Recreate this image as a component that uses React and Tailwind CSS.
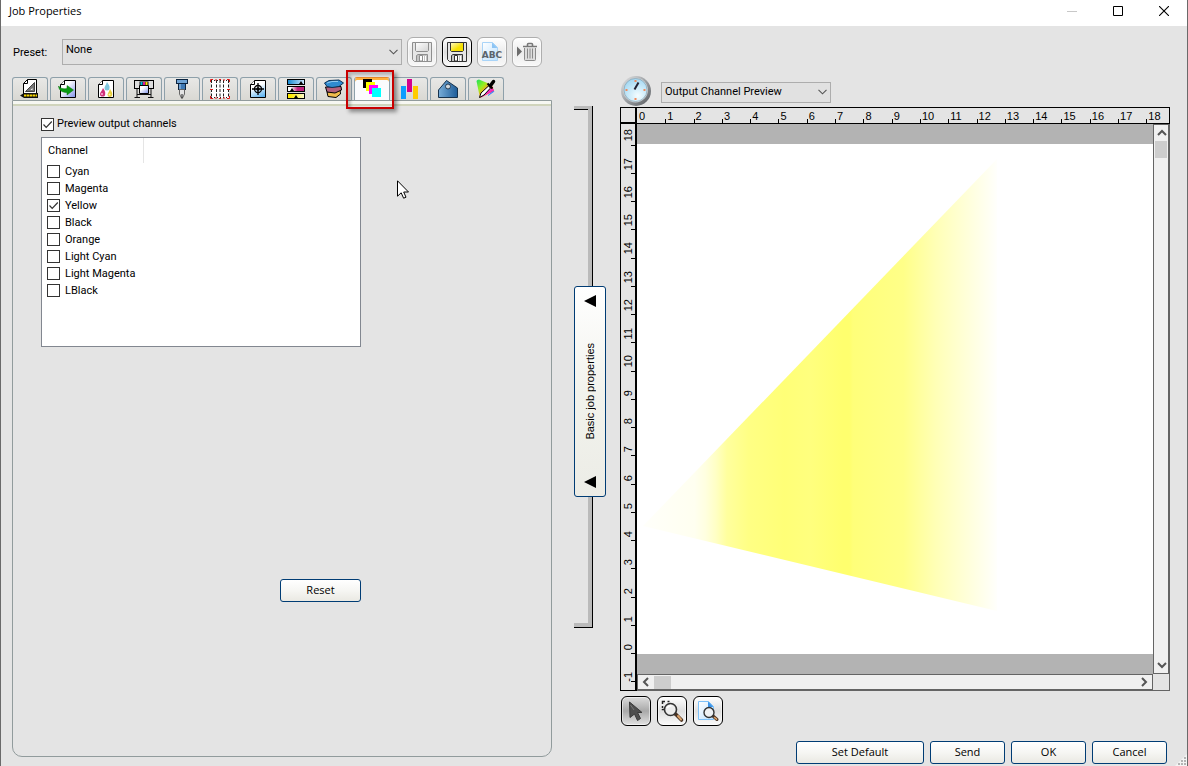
import React, { useState } from 'react';
import clsx from 'clsx';

const CHANNELS = ['Cyan', 'Magenta', 'Yellow', 'Black', 'Orange', 'Light Cyan', 'Light Magenta', 'LBlack'];

const H_TICKS = Array.from({ length: 19 }, (_, i) => i);
const V_TICKS = Array.from({ length: 20 }, (_, i) => 18 - i);

// Small sheet of paper with a folded corner, shared by several icons
const Sheet = ({ fill = '#fff' }) => (
    <>
        <path d="M6.5 1.5H17.5V18.5H2.5V5.5Z" fill={fill} stroke="#000" />
        <path d="M6.5 1.5V5.5H2.5" fill="#fff" stroke="#000" />
    </>
);

const TABS = [
    {
        name: 'Layout',
        icon: (
            <>
                <path d="M7.5 .5H16.5V15H3.5V4.5Z" fill="#fff" stroke="#000" />
                <path d="M7.5 .5V4.5H3.5" fill="none" stroke="#000" />
                <path d="M14.500 3.500V12.500H5.500Z" fill="#777" stroke="#444" />
                <path d="M12.500 9V11H10.500Z" fill="#fff" />
                <path d="M4 14H18V19H4L0 16.500Z" fill="#111" />
                <path d="M4 16.500H17" stroke="#f5d400" strokeWidth="2" strokeDasharray="2.500 .5" />
            </>
        ),
    },
    {
        name: 'Workflow',
        icon: (
            <>
                <Sheet fill="url(#sheetBlue)" />
                <path d="M.5 7C3 10 6 10 9 9.500V6.500L15.500 11L9 16V13.500C4 13.500 1 11.500 .5 7Z" fill="#0a9a12" stroke="#067008" strokeWidth=".5" />
            </>
        ),
    },
    {
        name: 'Color management',
        icon: (
            <>
                <Sheet />
                <path d="M11 3C13 6 14 7 13.500 9A2.500 2.500 0 0 1 8.500 9C8.500 7 10 6 11 3Z" fill="#7fc6dd" />
                <path d="M7 9C9 12 9.500 13 9.200 15A2.600 2.600 0 0 1 4 15C4 13 6 12 7 9Z" fill="#d0307a" />
                <path d="M14 10C16 13 16.500 14 16.200 16A2.400 2.400 0 0 1 11.500 16C11.500 14 13 13 14 10Z" fill="#e8cf3c" />
                <circle cx="6" cy="15" r="1" fill="#f6b7d4" />
                <circle cx="13.500" cy="15.500" r="1" fill="#fff6ba" />
            </>
        ),
    },
    {
        name: 'Printer',
        icon: (
            <>
                <path d="M3 9V18.500M17 18.500V9M.5 18.500H6M14 18.500H19.500M3 15.500H17" fill="none" stroke="#111" />
                <rect x=".5" y="1.500" width="19" height="8" fill="#ddd" stroke="#000" />
                <rect x="5.500" y="2.500" width="9" height="4" fill="#111" />
                <path d="M7.500 3V6" stroke="#0bd" strokeWidth="2" />
                <path d="M10 3V6" stroke="#e0189a" strokeWidth="2" />
                <path d="M12.500 3V6" stroke="#fd0" strokeWidth="2" />
                <path d="M5.500 6.500H14.500V14.500H5.500Z" fill="url(#sheetBlue)" stroke="#000" />
            </>
        ),
    },
    {
        name: 'Cutting',
        icon: (
            <>
                <rect x="4.500" y=".5" width="11" height="4" fill="#6fa3d4" stroke="#0b2440" />
                <rect x="6.500" y="4.500" width="7" height="6" fill="#3d78b4" stroke="#0b2440" />
                <path d="M8 5V10" stroke="#a9cdf0" />
                <path d="M7.500 10.500H12.500V15L10.500 19H9.500L7.500 15Z" fill="#e4e4e4" stroke="#666" />
                <path d="M10 15V19.500" stroke="#222" />
            </>
        ),
    },
    {
        name: 'Tiling',
        icon: (
            <>
                <rect x="1" y="1" width="18" height="18" fill="#fff" />
                <path d="M1.500 1V19M6.500 1V19M13.500 1V19M18.500 1V19M10 1V19" stroke="#222" strokeDasharray="3 1.500" />
                <path d="M1 1.500H19M1 18.500H19" stroke="#222" strokeDasharray="1 2" />
                <path d="M.5 3V.5H3M17 .5H19.500V3M19.500 17V19.500H17M3 19.500H.5V17M0 10.500H3M17 10.500H20M9 .5H11M9 19.500H11M6 0V2M14 0V2M6 18V20M14 18V20" fill="none" stroke="#e01818" />
            </>
        ),
    },
    {
        name: 'Marks',
        icon: (
            <>
                <Sheet fill="url(#sheetCyan)" />
                <circle cx="10" cy="10" r="3.500" fill="none" stroke="#000" strokeWidth="1.300" />
                <path d="M10 4V16M4 10H16" stroke="#000" strokeWidth="1.300" />
                <circle cx="10" cy="10" r="1.700" fill="#000" />
            </>
        ),
    },
    {
        name: 'Color correction',
        icon: (
            <>
                <rect x="1.500" y=".5" width="17" height="5" fill="url(#barCyan)" stroke="#000" />
                <rect x="1.500" y="7.500" width="17" height="5" fill="url(#barMagenta)" stroke="#000" />
                <rect x="1.500" y="14.500" width="17" height="5" fill="url(#barYellow)" stroke="#000" />
                <path d="M13 5L15 2L17 5ZM4 12L6 9L8 12ZM8 19L10 16L12 19Z" fill="#000" />
            </>
        ),
    },
    {
        name: 'Layers',
        icon: (
            <>
                <path d="M3 13L16 10L16.500 15L12 18.500L4 17.500Z" fill="#f0bd4c" stroke="#000" />
                <path d="M1.500 8L17 7.500L17.500 11L11 14L3 13Z" fill="#b3607c" stroke="#000" />
                <path d="M.5 4L5 1.500L15 1L19.500 4L15 7.500L8 8.500L3 7.500Z" fill="#2f8bd0" stroke="#0d3154" />
                <path d="M3 4L8 2.500H14" stroke="#8cc8ef" fill="none" />
            </>
        ),
    },
    {
        name: 'Output channels',
        icon: (
            <>
                <rect x="1" y="0" width="9" height="9" fill="#000" />
                <rect x="4" y="3" width="9" height="9" fill="#ff0" />
                <rect x="7" y="6" width="9" height="9" fill="#f0f" />
                <rect x="10" y="9" width="9" height="9" fill="#0ff" />
            </>
        ),
    },
    {
        name: 'Ink levels',
        icon: (
            <>
                <rect x="1" y="7" width="5" height="13" fill="#0d9dff" />
                <rect x="7" y="0" width="5" height="13" fill="#d4008c" />
                <rect x="13" y="7" width="5" height="13" fill="#ffcb00" />
            </>
        ),
    },
    {
        name: 'Cost',
        icon: (
            <>
                <path d="M.5 11L8.500 1.500L19.500 9V18.500H.5Z" fill="url(#tagBlue)" stroke="#16324c" />
                <circle cx="10" cy="7.500" r="2.500" fill="#cfd6dc" stroke="#243c52" />
            </>
        ),
    },
    {
        name: 'Color replacement',
        icon: (
            <>
                <path d="M.5 2Q1 .5 3 .5L16 6L18 12L4 19Z" fill="url(#gamut)" />
                <path d="M12 8L18 11L5 18.500L4 16Z" fill="#f22fc0" />
                <path d="M12 16L17 12L18.500 12.500L12 17Z" fill="#3a7bff" />
                <path d="M3.500 18.500L5 14L12.500 7L14.500 9L8 16Z" fill="#fff" stroke="#000" />
                <path d="M11.500 4.500L16.500 9.500" stroke="#000" strokeWidth="2" />
                <path d="M14.500 6.500L17.500 2.500" stroke="#000" strokeWidth="3.500" strokeLinecap="round" />
            </>
        ),
    },
];

function IconGradients() {
    return (
        <svg aria-hidden="true" className="absolute h-0 w-0">
            <defs>
                <linearGradient id="sheetBlue" x1="0" y1="0" x2="1" y2="1">
                    <stop offset="35%" stopColor="#fff" />
                    <stop offset="100%" stopColor="#7d8fe8" />
                </linearGradient>
                <linearGradient id="sheetCyan" x1="0.3" y1="0" x2="0.7" y2="1">
                    <stop offset="35%" stopColor="#fff" />
                    <stop offset="100%" stopColor="#5fb4f0" />
                </linearGradient>
                <linearGradient id="barCyan">
                    <stop offset="0%" stopColor="#1488d0" />
                    <stop offset="100%" stopColor="#cfeaff" />
                </linearGradient>
                <linearGradient id="barMagenta">
                    <stop offset="20%" stopColor="#fff" />
                    <stop offset="60%" stopColor="#c0207c" />
                </linearGradient>
                <linearGradient id="barYellow">
                    <stop offset="20%" stopColor="#ffe800" />
                    <stop offset="100%" stopColor="#fffbd0" />
                </linearGradient>
                <linearGradient id="tagBlue">
                    <stop offset="0%" stopColor="#79add8" />
                    <stop offset="100%" stopColor="#1d5c98" />
                </linearGradient>
                <linearGradient id="gamut" x1="0" y1="0" x2="1" y2="1">
                    <stop offset="0%" stopColor="#18e060" />
                    <stop offset="35%" stopColor="#9af01c" />
                    <stop offset="55%" stopColor="#ff9c20" />
                    <stop offset="75%" stopColor="#ff2060" />
                    <stop offset="100%" stopColor="#4a60ff" />
                </linearGradient>
                <linearGradient id="diskYellow" x1="0" y1="0" x2="1" y2="1">
                    <stop offset="0%" stopColor="#fffbd0" />
                    <stop offset="60%" stopColor="#f5e000" />
                </linearGradient>
                <linearGradient id="diskGray" x1="0" y1="0" x2="1" y2="1">
                    <stop offset="0%" stopColor="#fff" />
                    <stop offset="100%" stopColor="#d4d4d4" />
                </linearGradient>
                <linearGradient id="paperBlue" x1="0" y1="0" x2="1" y2="1">
                    <stop offset="0%" stopColor="#fff" />
                    <stop offset="100%" stopColor="#bfe2ff" />
                </linearGradient>
                <radialGradient id="dial" cx="0.6" cy="0.75" r="0.8">
                    <stop offset="0%" stopColor="#f4fdff" />
                    <stop offset="100%" stopColor="#9fd6f2" />
                </radialGradient>
                <linearGradient id="dialRim" x1="0" y1="0" x2="1" y2="1">
                    <stop offset="0%" stopColor="#e8e8e8" />
                    <stop offset="45%" stopColor="#a2a6aa" />
                    <stop offset="100%" stopColor="#55585c" />
                </linearGradient>
            </defs>
        </svg>
    );
}

const DiskIcon = ({ stroke, fill }) => (
    <svg viewBox="0 0 20 20" className="h-5 w-5" aria-hidden="true">
        <path d="M.5 .5H19.500V19.500H2.500L.5 17.500Z" fill="#e6e6e6" stroke={stroke} />
        <path d="M3.500 .5H16.500V8.500L15.500 9.500H4.500L3.500 8.500Z" fill={fill} stroke={stroke} />
        <path d="M4.500 19V13.500L6 12.500H15.500V19" fill="#c4c4c4" stroke={stroke} />
        <path d="M7.500 13.500H10.500V19H7.500Z" fill="#fff" stroke={stroke} />
        <path d="M11.500 14V19M13.500 14V19" stroke="#fff" />
    </svg>
);

const RenameIcon = () => (
    <svg viewBox="0 0 20 20" className="h-5 w-5 overflow-visible" aria-hidden="true">
        <path d="M.5 .5H10.500L15.500 5.500V18.500H.5Z" fill="url(#paperBlue)" stroke="#a9d4f8" />
        <path d="M10 .5V6H15.500Z" fill="#8cc4f4" />
        <text x="10" y="16" textAnchor="middle" fontFamily="DejaVu Sans" fontWeight="bold" fontSize="9" fill="#5c646c">ABC</text>
    </svg>
);

const TrashIcon = () => (
    <svg viewBox="0 0 20 20" className="h-5 w-5" aria-hidden="true">
        <path d="M0 4.500L5 9.500L0 14.500Z" fill="#6c6c6c" />
        <path d="M6 4.500H20M10.500 4V2.500Q10.500 1.500 11.500 1.500H14.500Q15.500 1.500 15.500 2.500V4" fill="none" stroke="#777" strokeWidth="1.600" />
        <path d="M7.500 6V17.500Q7.500 18.500 8.500 18.500H17.500Q18.500 18.500 18.500 17.500V6" fill="#ddd" stroke="#8a8a8a" />
        <path d="M10.500 6.500V16.500M13 6.500V16.500M15.500 6.500V16.500" stroke="#888" />
    </svg>
);

const ArrowIcon = () => (
    <svg viewBox="0 0 20 20" className="h-5 w-5" aria-hidden="true">
        <path d="M3.500 1L16 11.500H11.500L14.500 17.500L11.500 19.500L8.500 13L4 16.500Z" fill="#4e4e4e" stroke="#3a3a3a" />
        <path d="M4.500 4L8 9" stroke="#777" />
    </svg>
);

const ZoomAreaIcon = () => (
    <svg viewBox="0 0 20 20" className="h-5 w-5 overflow-visible" aria-hidden="true">
        <path d="M.5 3V.5H3M5.500 .5H7.500M.5 5V7M.5 8V8.500H3" fill="none" stroke="#222" strokeWidth="1.500" />
        <path d="M13.500 13L19.500 19" stroke="#4a3323" strokeWidth="3.600" strokeLinecap="round" />
        <path d="M16 15L19 18.500" stroke="#dba168" strokeWidth="2" strokeLinecap="round" />
        <circle cx="8.500" cy="8.500" r="6" fill="#eee" fillOpacity=".85" stroke="#333" strokeWidth="1.600" />
        <path d="M5 7Q6.500 4.500 9.500 5" fill="none" stroke="#fff" strokeWidth="1.500" />
    </svg>
);

const ZoomPageIcon = () => (
    <svg viewBox="0 0 20 20" className="h-5 w-5 overflow-visible" aria-hidden="true">
        <path d="M.5 .5H10.500L15.500 5.500V18.500H.5Z" fill="url(#paperBlue)" stroke="#7cc0f8" />
        <path d="M10 .5V6H15.500Z" fill="#3c94e8" />
        <path d="M15 15L19 18.500" stroke="#4a3323" strokeWidth="3" strokeLinecap="round" />
        <path d="M16.500 16.500L18.500 18.200" stroke="#dba168" strokeWidth="1.600" strokeLinecap="round" />
        <circle cx="11" cy="11.500" r="5" fill="#f2f2f2" fillOpacity=".9" stroke="#333" strokeWidth="1.400" />
    </svg>
);

function ToolButton({ label, active, disabled, children }) {
    return (
        <button
            type="button"
            aria-label={label}
            disabled={disabled}
            className={clsx(
                'flex h-[30px] w-[30px] items-center justify-center rounded-[6px] border bg-linear-to-b shadow-[inset_0_0_0_1px_#fff8]',
                disabled ? 'border-[#aeaeae] from-white via-[#ececec] to-[#f8f8f8]' : 'border-black',
                !disabled && (active ? 'from-[#dcdcdc] via-[#a9a9a9] to-[#e2e2e2]' : 'from-white via-[#dedede] to-[#fafafa]')
            )}
        >
            {children}
        </button>
    );
}

function DialogButton({ className, children }) {
    return (
        <button
            type="button"
            className={clsx(
                'h-[23px] rounded-[3px] border border-[#003c74] bg-linear-to-b from-white via-[#f6f6f3] to-[#eae9e3] pb-px font-["Open_Sans",sans-serif] text-[11px] leading-4',
                className
            )}
        >
            {children}
        </button>
    );
}

function DropDown({ id, options, className }) {
    return (
        <div className={clsx('relative', className)}>
            <select
                id={id}
                aria-label={id}
                className="block h-full w-full appearance-none border border-[#adadad] bg-[#e1e1e1] px-[3px] text-[11px] leading-4"
            >
                {options.map((option) => (
                    <option key={option}>{option}</option>
                ))}
            </select>
            <svg viewBox="0 0 9 6" className="pointer-events-none absolute top-1/2 right-1 h-[6px] w-[9px] -translate-y-1/2" aria-hidden="true">
                <path d="M.5 .8L4.500 4.800L8.500 .8" fill="none" stroke="#555" strokeWidth="1.100" />
            </svg>
        </div>
    );
}

function CheckBox({ label, checked, onChange, gap }) {
    return (
        <label className={clsx('flex items-center', gap)}>
            <span className="relative flex h-[13px] w-[13px] shrink-0">
                <input
                    type="checkbox"
                    checked={checked}
                    onChange={onChange}
                    className="h-full w-full appearance-none border border-[#333] bg-white"
                />
                {checked && (
                    <svg viewBox="0 0 13 13" className="pointer-events-none absolute inset-0" aria-hidden="true">
                        <path d="M2.500 6.500L5.200 9.300L10.800 3.500" fill="none" stroke="#333" strokeWidth="1.200" />
                    </svg>
                )}
            </span>
            <span>{label}</span>
        </label>
    );
}

function TitleBar() {
    return (
        <header className="flex h-[26px] shrink-0 items-center justify-between bg-white pr-[18px] pb-[5px] pl-2">
            <h1 className='font-["Open_Sans",sans-serif] text-[11px] leading-4'>Job Properties</h1>
            <div className="flex gap-9">
                <button type="button" aria-label="Minimize">
                    <svg viewBox="0 0 10 10" className="h-[10px] w-[10px]"><path d="M0 5.500H10" stroke="#c8c8c8" /></svg>
                </button>
                <button type="button" aria-label="Maximize">
                    <svg viewBox="0 0 10 10" className="h-[10px] w-[10px]"><path d="M.5 .5H9.500V9.500H.5Z" fill="none" stroke="#000" /></svg>
                </button>
                <button type="button" aria-label="Close">
                    <svg viewBox="0 0 10 10" className="h-[10px] w-[10px]"><path d="M0 0L10 10M10 0L0 10" stroke="#000" strokeWidth="1.100" /></svg>
                </button>
            </div>
        </header>
    );
}

function PresetRow() {
    return (
        <div className="flex h-[30px] items-center gap-[5px]">
            <label htmlFor="Preset" className="w-[45px] pt-[3px] pl-px text-[11px]">Preset:</label>
            <DropDown id="Preset" options={['None']} className="h-[26px] min-w-0 flex-1 [&>select]:pb-[4px]" />
            <ToolButton label="Save preset" disabled><DiskIcon stroke="#8f8f8f" fill="url(#diskGray)" /></ToolButton>
            <ToolButton label="Save preset as"><DiskIcon stroke="#333" fill="url(#diskYellow)" /></ToolButton>
            <ToolButton label="Rename preset" disabled><RenameIcon /></ToolButton>
            <ToolButton label="Delete preset" disabled><TrashIcon /></ToolButton>
        </div>
    );
}

function TabStrip({ current, onSelect }) {
    return (
        <div role="tablist" className="flex gap-[2px]">
            {TABS.map((tab, index) => (
                <div key={tab.name} className="relative">
                    <button
                        type="button"
                        role="tab"
                        aria-label={tab.name}
                        aria-selected={index === current}
                        onClick={() => onSelect(index)}
                        className={clsx(
                            'flex h-[23px] w-9 justify-center rounded-t-[3px] border border-b-0 border-[#8ea0aa] pt-px',
                            index === current
                                ? 'border-t-[#e68b2c] bg-[#fbfbfd] shadow-[inset_0_2px_0_#ffb13d]'
                                : 'bg-linear-to-b from-[#e8e8e6] to-[#d9d8d3]'
                        )}
                    >
                        <svg viewBox="0 0 20 20" className="relative h-5 w-5" aria-hidden="true">{tab.icon}</svg>
                    </button>
                    {index === current && (
                        <span className="pointer-events-none absolute -top-[7px] -right-1 -bottom-[9px] -left-2 z-10 border-2 border-[#c80000] shadow-[3px_3px_4px_#0006,inset_3px_3px_3px_#0003]" />
                    )}
                </div>
            ))}
        </div>
    );
}

function ChannelTable({ selected, onToggle }) {
    return (
        <div className="h-[210px] border border-[#828790] bg-white">
            <table className="w-full border-collapse text-left text-[11px] leading-[17px]">
                <thead>
                    <tr className="h-[25px]">
                        <th className="w-[101px] border-r border-[#e5e5e5] pl-[6px] font-normal">Channel</th>
                        <th aria-hidden="true" />
                    </tr>
                </thead>
                <tbody>
                    {CHANNELS.map((channel) => (
                        <tr key={channel}>
                            <td colSpan={2} className="pl-[5px]">
                                <CheckBox
                                    label={channel}
                                    gap="gap-[5px]"
                                    checked={selected.includes(channel)}
                                    onChange={() => onToggle(channel)}
                                />
                            </td>
                        </tr>
                    ))}
                </tbody>
            </table>
        </div>
    );
}

function OutputChannelsPanel() {
    const [preview, setPreview] = useState(true);
    const [selected, setSelected] = useState(['Yellow']);

    const handleToggle = (channel) => {
        setSelected((prev) => (prev.includes(channel) ? prev.filter((c) => c !== channel) : [...prev, channel]));
    };

    return (
        <section className="flex-1 overflow-hidden rounded-b-[10px] border border-[#919b9c]">
            <div className="h-[5px] border-b-2 border-[#d0d4bc] bg-[#f6f7f2]" />
            <div className="ml-7 flex max-w-[320px] flex-col pt-[10px]">
                <div className="text-[11px] leading-4">
                    <CheckBox label="Preview output channels" gap="gap-[3px]" checked={preview} onChange={() => setPreview(!preview)} />
                </div>
                <div className="mt-[5px]">
                    <ChannelTable selected={selected} onToggle={handleToggle} />
                </div>
                <DialogButton className="mt-[232px] w-[81px] self-end">Reset</DialogButton>
            </div>
        </section>
    );
}

function CollapseStrip() {
    return (
        <div className="flex flex-col pt-20 pb-[138px]">
            <div className="flex w-[19px] flex-[180] border-r border-black">
                <div className="flex w-full border-t-[3px] border-r-4 border-[#bababa]">
                    <div className="w-full border-t border-black" />
                </div>
            </div>
            <button
                type="button"
                className="flex h-[211px] w-8 flex-col items-center justify-between rounded-[3px] border border-[#003c74] bg-linear-to-b from-white via-[#f2f3ed] to-[#ecece6] py-2"
            >
                <svg viewBox="0 0 12 12" className="h-3 w-3" aria-hidden="true"><path d="M0 6L12 0V12Z" /></svg>
                <span className='rotate-180 font-["Liberation_Sans",sans-serif] text-[11px] leading-4 [writing-mode:vertical-rl]'>
                    Basic job properties
                </span>
                <svg viewBox="0 0 12 12" className="h-3 w-3" aria-hidden="true"><path d="M0 6L12 0V12Z" /></svg>
            </button>
            <div className="flex w-[19px] flex-[130] border-r border-b border-black">
                <div className="w-full border-r-4 border-b-4 border-[#bababa]" />
            </div>
        </div>
    );
}

const ScrollArrow = ({ d, label }) => (
    <button type="button" aria-label={label} className="flex h-4 w-4 shrink-0 items-center justify-center">
        <svg viewBox="0 0 10 10" className="h-[10px] w-[10px]"><path d={d} fill="none" stroke="#555" strokeWidth="2" /></svg>
    </button>
);

function PreviewArea() {
    return (
        <div className='grid min-h-[400px] flex-1 grid-cols-[17px_minmax(0,1fr)_17px] grid-rows-[17px_minmax(0,1fr)_17px] font-["Liberation_Sans",sans-serif] text-[11px] leading-3'>
            <div className="border border-r-2 border-b-2 border-black" />
            <div className="col-span-2 grid grid-cols-[repeat(18,minmax(0,1fr))_minmax(0,0.8fr)] overflow-hidden border border-l-0 border-black">
                {H_TICKS.map((n) => (
                    <div key={n} className="flex gap-px pt-[2px]">
                        <span className={clsx('h-1 w-px self-end', n > 0 && 'bg-black')} />
                        <span>{n}</span>
                    </div>
                ))}
            </div>

            <div className="row-span-2 grid grid-rows-[minmax(0,0.77fr)_repeat(19,minmax(0,1fr))_minmax(0,0.27fr)] border-r-2 border-b border-l border-black">
                {V_TICKS.map((n) => (
                    <div key={n} className="flex flex-col items-center justify-end">
                        <span className="rotate-180 [writing-mode:vertical-rl]">{n}</span>
                        <span className={clsx('h-px w-1 shrink-0 self-end bg-black', n < 0 ? 'mt-0' : 'mt-[3px]')} />
                    </div>
                ))}
            </div>
            <div className="bg-[#b3b3b3] py-5">
                <svg viewBox="0 0 516 510" preserveAspectRatio="none" className="h-full w-full bg-white" role="img" aria-label="Channel preview">
                    <defs>
                        <linearGradient id="inkYellow" gradientUnits="userSpaceOnUse" x1="0" y1="0" x2="360" y2="0">
                            <stop offset="2%" stopColor="#fffffa" />
                            <stop offset="16%" stopColor="#fffff0" />
                            <stop offset="19%" stopColor="#ffffe0" />
                            <stop offset="22%" stopColor="#ffffc4" />
                            <stop offset="25%" stopColor="#ffff9e" />
                            <stop offset="31%" stopColor="#ffff84" />
                            <stop offset="41%" stopColor="#ffff77" />
                            <stop offset="48%" stopColor="#ffff7e" />
                            <stop offset="57%" stopColor="#ffff6e" />
                            <stop offset="59%" stopColor="#ffff6e" />
                            <stop offset="60%" stopColor="#ffff79" />
                            <stop offset="74%" stopColor="#ffff88" />
                            <stop offset="83%" stopColor="#ffffb6" />
                            <stop offset="93%" stopColor="#ffffdf" />
                            <stop offset="100%" stopColor="#fffffc" />
                        </linearGradient>
                    </defs>
                    <path d="M6 382L360 15V467Z" fill="url(#inkYellow)" />
                </svg>
            </div>
            <div className="flex flex-col justify-between border border-r-2 border-[#646464] bg-[#f0f0f0]">
                <div>
                    <ScrollArrow label="Scroll up" d="M1 7L5 3L9 7" />
                    <div className="mx-px h-[17px] bg-[#cdcdcd]" />
                </div>
                <ScrollArrow label="Scroll down" d="M1 3L5 7L9 3" />
            </div>

            <div className="flex items-center justify-between border border-b-2 border-[#646464] bg-[#f0f0f0]">
                <div className="flex items-center">
                    <ScrollArrow label="Scroll left" d="M7 1L3 5L7 9" />
                    <div className="h-[13px] w-[17px] bg-[#cdcdcd]" />
                </div>
                <ScrollArrow label="Scroll right" d="M3 1L7 5L3 9" />
            </div>
            <div className="border-r border-b border-[#646464]" />
        </div>
    );
}

function PreviewColumn() {
    return (
        <div className="flex min-w-0 flex-1 flex-col pt-12">
            <div className="flex h-[33px] shrink-0 items-center gap-[9px]">
                <svg viewBox="0 0 32 32" className="h-8 w-8" aria-hidden="true">
                    <circle cx="16" cy="16" r="15" fill="url(#dialRim)" />
                    <circle cx="15.500" cy="15" r="12.500" fill="#c9cdd0" />
                    <circle cx="15.500" cy="15" r="11.500" fill="url(#dial)" stroke="#7c9aab" strokeWidth=".6" />
                    <path d="M15.500 5V7M15.500 23V25M5.500 15H7.500M23.500 15H25.500" stroke="#f08a5c" strokeWidth="2" />
                    <path d="M14.500 14.500L18.500 7.500" stroke="#223" strokeWidth="2" />
                </svg>
                <DropDown id="Preview mode" options={['Output Channel Preview']} className="mt-[3px] h-[21px] w-[170px]" />
            </div>
            <PreviewArea />
            <div className="mt-[5px] flex gap-[6px] pl-px">
                <ToolButton label="Select" active><ArrowIcon /></ToolButton>
                <ToolButton label="Zoom to area"><ZoomAreaIcon /></ToolButton>
                <ToolButton label="Zoom to page"><ZoomPageIcon /></ToolButton>
            </div>
            <footer className="mt-[15px] mb-[2px] flex justify-end gap-[6px] pr-[3px]">
                <DialogButton className="w-32">Set Default</DialogButton>
                <DialogButton className="w-[75px]">Send</DialogButton>
                <DialogButton className="w-[75px]">OK</DialogButton>
                <DialogButton className="w-[75px]">Cancel</DialogButton>
            </footer>
        </div>
    );
}

function App() {
    const [currentTab, setCurrentTab] = useState(9);

    return (
        <div className='relative flex min-h-screen flex-col border-x border-[#6a6a6a] bg-[#e4e4e4] font-["Roboto",sans-serif] text-black'>
            <IconGradients />
            <TitleBar />
            <main className="flex flex-1 pr-[17px] pl-[11px]">
                <div className="mr-[22px] flex min-w-0 flex-[54] flex-col pt-[11px] pb-[9px]">
                    <div className="pr-[10px]">
                        <PresetRow />
                    </div>
                    <div className="mt-[10px]">
                        <TabStrip current={currentTab} onSelect={setCurrentTab} />
                    </div>
                    <OutputChannelsPanel />
                </div>
                <CollapseStrip />
                <div className="ml-[14px] flex min-w-0 flex-[55]">
                    <PreviewColumn />
                </div>
            </main>

            {/* Mouse pointer */}
            <svg viewBox="0 0 12 19" className="pointer-events-none absolute top-[180px] left-[396px] h-[19px] w-3" aria-hidden="true">
                <path d="M.5 .8V16.200L4.200 12.800L6.600 18.200L9 17.200L6.700 12H11.500Z" fill="#fff" stroke="#000" />
            </svg>
            {/* Resize grip */}
            <svg viewBox="0 0 12 12" className="absolute right-0 bottom-0 h-3 w-3" aria-hidden="true">
                <path d="M12 0V12H0Z" fill="#f4f4f4" />
                <path d="M9 4H11M6 7H8M9 7H11M3 10H5M6 10H8M9 10H11" stroke="#b4b4b4" strokeWidth="2" />
            </svg>
        </div>
    );
}

export default App;
